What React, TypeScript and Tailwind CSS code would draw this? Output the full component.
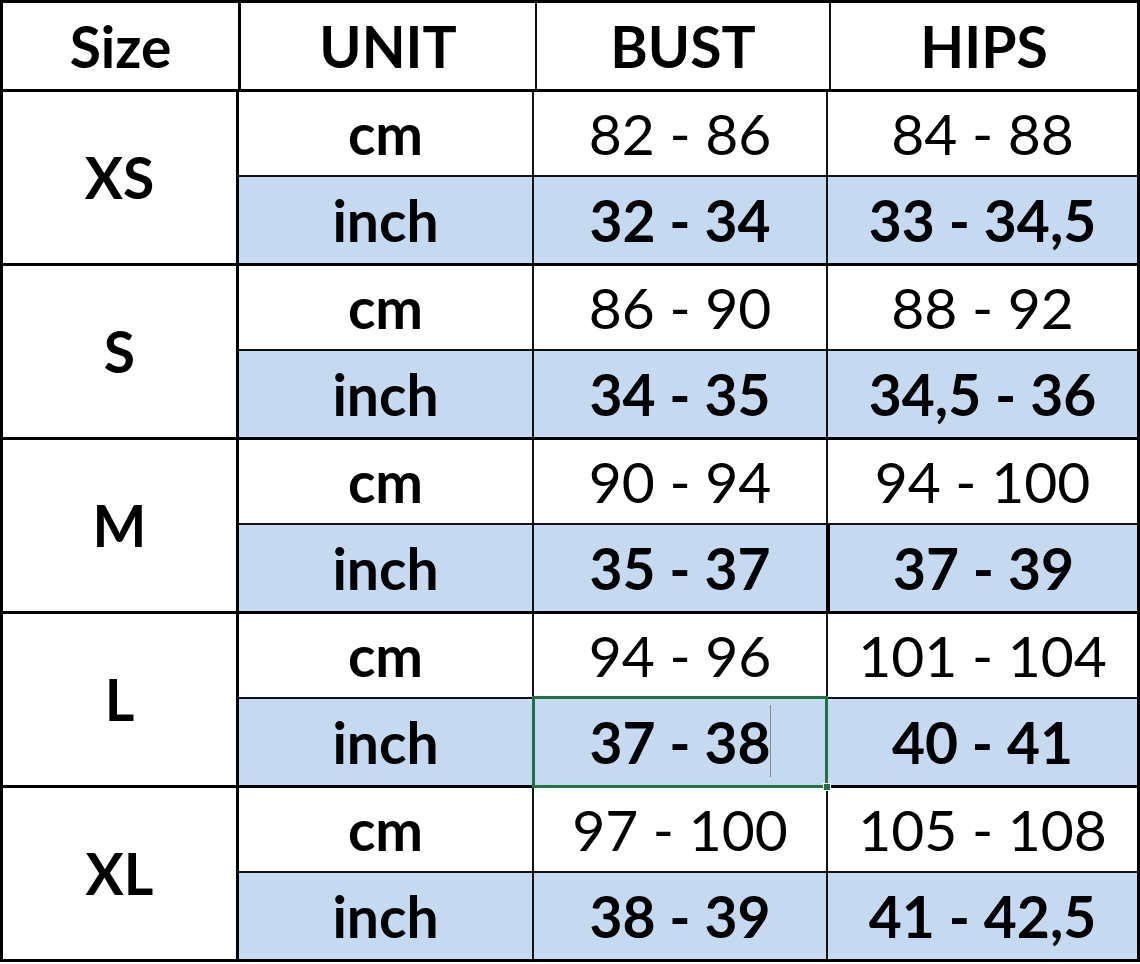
const groups = [
  { size: "XS", cm: ["82 - 86", "84 - 88"], inch: ["32 - 34", "33 - 34,5"] },
  { size: "S", cm: ["86 - 90", "88 - 92"], inch: ["34 - 35", "34,5 - 36"] },
  { size: "M", cm: ["90 - 94", "94 - 100"], inch: ["35 - 37", "37 - 39"] },
  { size: "L", cm: ["94 - 96", "101 - 104"], inch: ["37 - 38", "40 - 41"] },
  { size: "XL", cm: ["97 - 100", "105 - 108"], inch: ["38 - 39", "41 - 42,5"] },
];

const font = "font-['Lato','Open_Sans',sans-serif]";

export default function App() {
  return (
    <div className={`w-[1140px] bg-white text-black ${font}`}>
      <div className="border-[3px] border-black">
        {/* header */}
        <div className="flex h-[89px] border-b-[3px] border-black text-[57px] font-bold leading-none">
          <div className="w-[235px] flex items-center justify-center">Size</div>
          <div className="w-[297px] border-l-[3px] border-black flex items-center justify-center">UNIT</div>
          <div className="w-[294px] border-l-2 border-[#111] flex items-center justify-center">BUST</div>
          <div className="w-[308px] border-l-2 border-[#111] flex items-center justify-center">HIPS</div>
        </div>

        {groups.map((g, gi) => (
          <div
            key={g.size}
            className={`flex ${gi < groups.length - 1 ? "border-b-[3px] border-black" : ""}`}
          >
            <div className="w-[233px] flex items-center justify-center text-[57px] font-bold leading-none">
              {g.size}
            </div>
            <div className="w-[901px] border-l-[3px] border-black flex flex-col">
              {/* cm row */}
              <div className="flex h-[85px] border-b-2 border-[#111] leading-none">
                <div className="w-[293px] flex items-center justify-center text-[57px] font-bold">cm</div>
                <div className="w-[294px] border-l-2 border-[#111] flex items-center justify-center text-[57px]">
                  {g.cm[0]}
                </div>
                <div className="w-[311px] border-l-2 border-[#111] flex items-center justify-center text-[57px]">
                  {g.cm[1]}
                </div>
              </div>
              {/* inch row */}
              <div className="flex h-[86px] bg-[#c5d9f1] leading-none text-[57px] font-bold">
                <div className="w-[293px] flex items-center justify-center">inch</div>
                <div className="relative w-[294px] border-l-2 border-[#111] flex items-center justify-center">
                  {g.inch[0]}
                  {g.size === "L" && (
                    <>
                      <div className="absolute -left-[2px] -top-[3px] -bottom-[3px] right-[-2px] border-[3px] border-[#217346]" />
                      <div className="absolute right-[-5px] bottom-[-6px] w-[8px] h-[8px] bg-[#217346] border border-white" />
                      <div className="absolute left-[236px] top-[6px] h-[72px] w-px bg-[#8a8a8a]" />
                    </>
                  )}
                </div>
                <div
                  className={`w-[311px] flex items-center justify-center ${
                    g.size === "M" ? "border-l-4 border-black" : "border-l-2 border-[#111]"
                  }`}
                >
                  {g.inch[1]}
                </div>
              </div>
            </div>
          </div>
        ))}
      </div>
    </div>
  );
}
